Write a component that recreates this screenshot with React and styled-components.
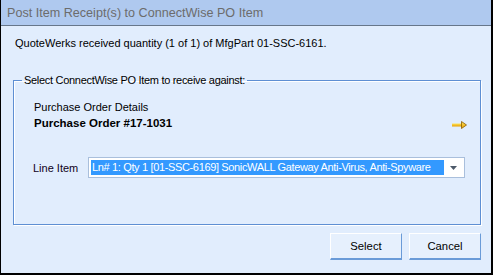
import React from "react";
import styled, { createGlobalStyle } from "styled-components";

const Global = createGlobalStyle`
  html, body { margin: 0; padding: 0; background: #e1edfd; }
  body { font-family: "Liberation Sans", Arial, sans-serif; }
  * { box-sizing: border-box; }
`;

const Window = styled.div`
  width: 493px;
  height: 275px;
  display: flex;
  flex-direction: column;
  background: #e1edfd;
  border-left: 1px solid #000;
  border-right: 2px solid #000;
  border-bottom: 2px solid #000;
`;

const TitleBar = styled.div`
  height: 26px;
  flex: none;
  display: flex;
  align-items: center;
  padding-left: 6px;
  background: #afc9ef;
  border-bottom: 1px solid #66768a;
  color: #6c6c6c;
  font-size: 12.6px;
`;

const Body = styled.div`
  flex: 1;
  display: flex;
  flex-direction: column;
  padding: 11px 10px 0 12px;
  font-size: 11px;
  color: #000;
`;

const Message = styled.div`
  line-height: 13px;
  padding-left: 2px;
  margin-bottom: 23px;
`;

const Group = styled.fieldset`
  margin: 0;
  width: 468px;
  height: 152px;
  padding: 14px 13px 0 8px;
  border: 1px solid #5e8fd3;
  box-shadow: inset 1px 1px 0 #fff, 1px 1px 0 #fff;
`;

const Legend = styled.legend`
  padding: 0 2px;
  line-height: 14px;
  letter-spacing: -0.3px;
`;

const Content = styled.div`
  display: flex;
  flex-direction: column;
  padding-left: 11px;
`;

const Label = styled.div`
  line-height: 13px;
  padding-left: 1px;
`;

const PORow = styled.div`
  display: flex;
  justify-content: space-between;
  align-items: flex-end;
  line-height: 13px;
  margin-top: 3px;
  padding-left: 1px;
`;

const Bold = styled.span`
  font-weight: bold;
  font-size: 11.5px;
`;

const LineRow = styled.div`
  display: flex;
  align-items: center;
  margin-top: 27px;
`;

const LineLabel = styled.div`
  width: 55px;
  color: #100020;
`;

const Combo = styled.div`
  width: 377px;
  height: 21px;
  display: flex;
  align-items: center;
  padding: 1px;
  background: #fff;
  border: 1px solid #a9bfdc;
`;

const Selected = styled.div`
  width: 353px;
  height: 15px;
  line-height: 15px;
  margin-left: 1px;
  padding-left: 1px;
  background: #3399ff;
  color: #fff;
  white-space: nowrap;
  overflow: hidden;
  letter-spacing: -0.35px;
`;

const ComboArrow = styled.div`
  flex: 1;
  display: flex;
  justify-content: center;
  align-items: center;
`;

const Buttons = styled.div`
  display: flex;
  justify-content: flex-end;
  gap: 7px;
  margin-top: 8px;
  width: 468px;
`;

const Button = styled.button`
  width: 72px;
  height: 27px;
  padding: 0;
  font-family: inherit;
  font-size: 11.3px;
  color: #000;
  background: #e6f0fd;
  border-top: 1px solid #fff;
  border-left: 1px solid #fff;
  border-right: 1px solid #6a9bd8;
  border-bottom: 2px solid #6a9bd8;
`;

const GoArrow = () => (
  <svg width="15" height="8" viewBox="0 0 15 8" style={{ marginBottom: 1 }}>
    <defs>
      <linearGradient id="ag" x1="0" y1="0" x2="0" y2="1">
        <stop offset="0" stopColor="#ffe45a" />
        <stop offset="1" stopColor="#e8a000" />
      </linearGradient>
    </defs>
    <rect x="0" y="2.5" width="10" height="3" fill="url(#ag)" />
    <path d="M9.5 0.5 L14.5 4 L9.5 7.5 Z" fill="url(#ag)" stroke="#8a5a00" strokeWidth="0.8" />
  </svg>
);

export default function App() {
  return (
    <>
      <Global />
      <Window>
        <TitleBar>Post Item Receipt(s) to ConnectWise PO Item</TitleBar>
        <Body>
          <Message>QuoteWerks received quantity (1 of 1) of MfgPart 01-SSC-6161.</Message>
          <Group>
            <Legend>Select ConnectWise PO Item to receive against:</Legend>
            <Content>
              <Label>Purchase Order Details</Label>
              <PORow>
                <Bold>Purchase Order #17-1031</Bold>
                <GoArrow />
              </PORow>
              <LineRow>
                <LineLabel>Line Item</LineLabel>
                <Combo>
                  <Selected>Ln# 1: Qty 1 [01-SSC-6169] SonicWALL Gateway Anti-Virus, Anti-Spyware</Selected>
                  <ComboArrow>
                    <svg width="7" height="4" viewBox="0 0 7 4">
                      <path d="M0 0 H7 L3.5 4 Z" fill="#4d5a6a" />
                    </svg>
                  </ComboArrow>
                </Combo>
              </LineRow>
            </Content>
          </Group>
          <Buttons>
            <Button>Select</Button>
            <Button>Cancel</Button>
          </Buttons>
        </Body>
      </Window>
    </>
  );
}
